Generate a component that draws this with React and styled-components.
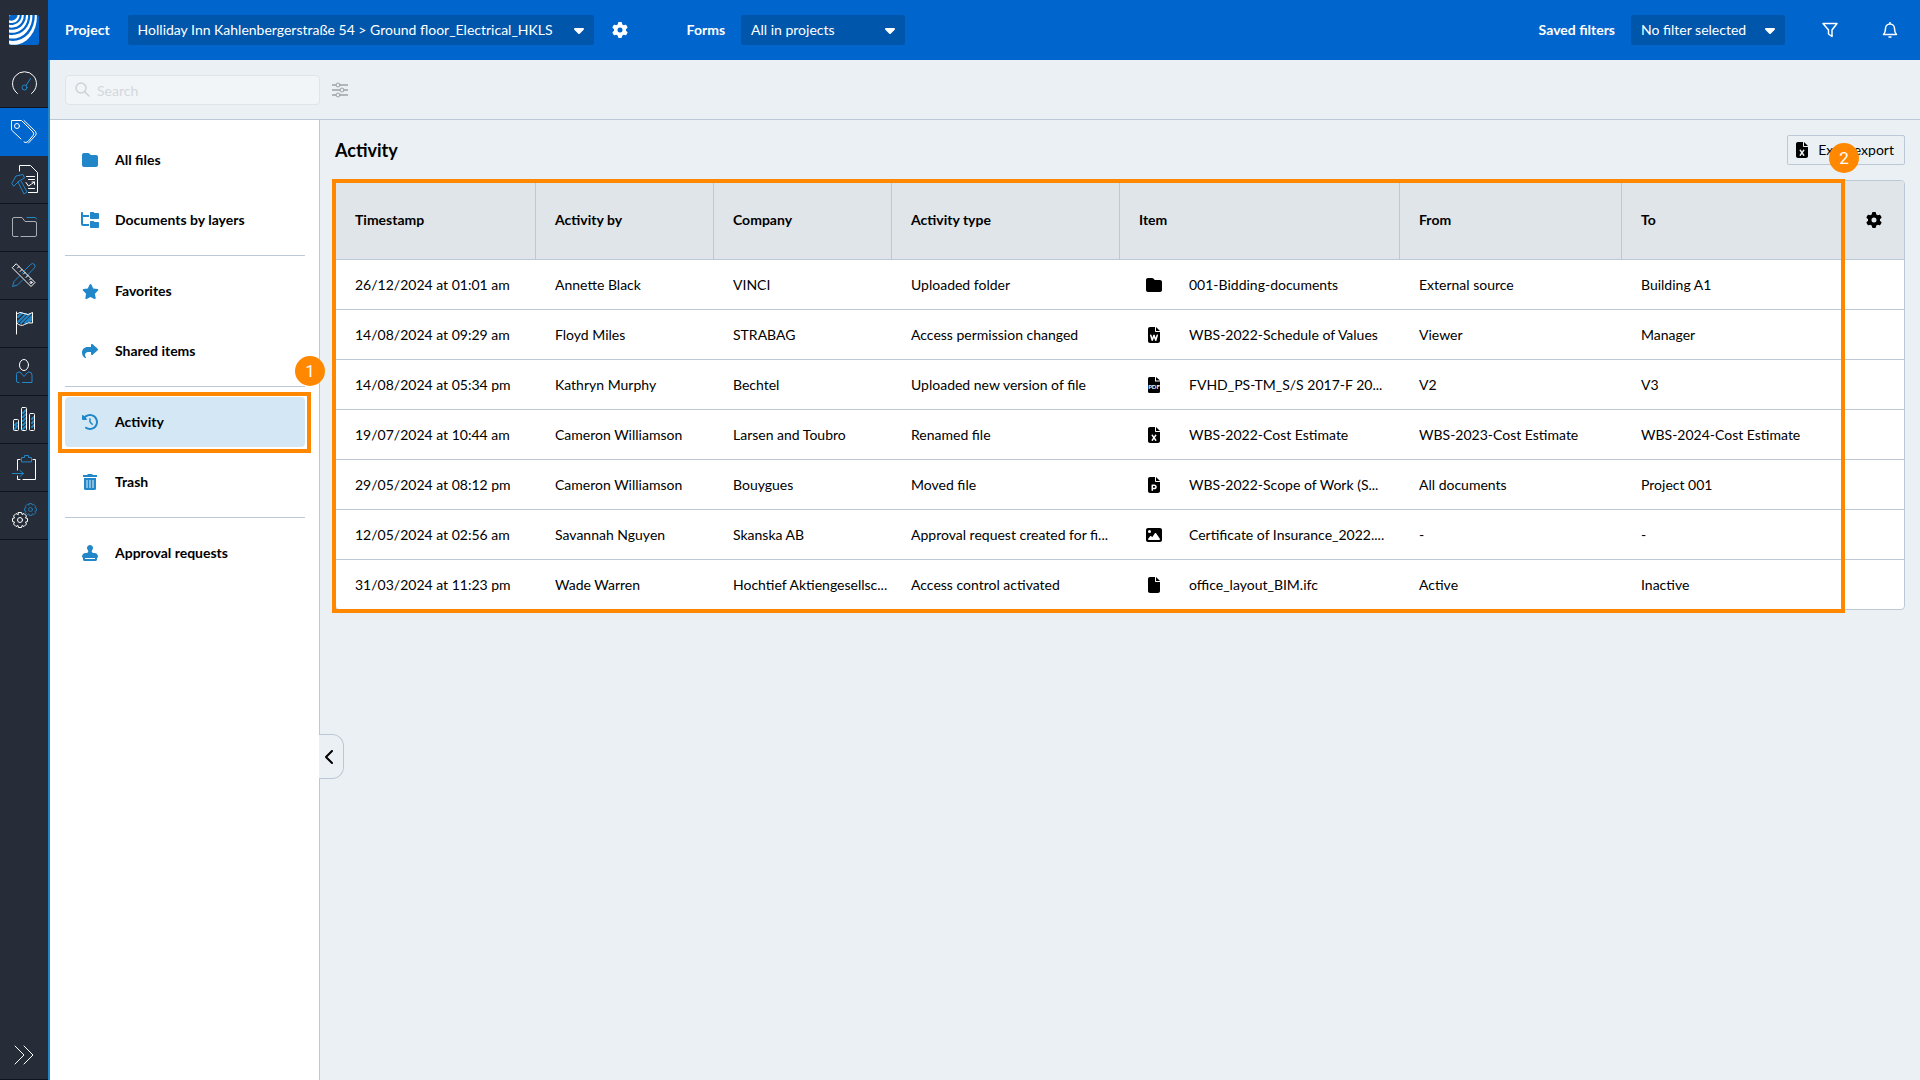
import styled, { createGlobalStyle } from "styled-components"
import {
    FaCaretDown,
    FaClockRotateLeft,
    FaFile,
    FaFileExcel,
    FaFilePowerpoint,
    FaFileWord,
    FaFolder,
    FaFolderTree,
    FaGear,
    FaImage,
    FaShare,
    FaStamp,
    FaStar,
} from "react-icons/fa6"

const GlobalStyle = createGlobalStyle`
    * {
        box-sizing: border-box;
    }
    body {
        margin: 0;
        background-color: #eaf0f4;
        color: #000;
        font-family: Lato, "Liberation Sans", sans-serif;
        font-size: 14px;
        line-height: 20px;
    }
    button, input, select {
        font: inherit;
        color: inherit;
    }
`

const Shell = styled.div`
    display: flex;
    min-height: 100vh;
`

/* left rail */
const Rail = styled.nav`
    width: 48px;
    flex-shrink: 0;
    display: flex;
    flex-direction: column;
    background-color: #272d38;
    border-bottom: 1px solid #0e1420;
`
const LogoLink = styled.a`
    height: 60px;
    display: flex;
    align-items: center;
    justify-content: center;
`
const RailLink = styled.a`
    height: 48px;
    padding-bottom: 2px;
    display: flex;
    align-items: center;
    justify-content: center;
    background-color: ${props => props.$active ? "#0065cc" : "transparent"};
    border-bottom: 1px solid ${props => props.$active ? "#0065cc" : "#0e1420"};
`
const RailToggle = styled.button`
    height: 48px;
    margin-top: auto;
    padding: 0;
    border: none;
    background: none;
    cursor: pointer;
`
const LineSvg = styled.svg`
    fill: none;
    stroke: ${props => props.$color || "#fff"};
    stroke-width: 1;
    stroke-linecap: round;
    stroke-linejoin: round;
    display: block;
    margin: auto;

    .blue {
        stroke: #2287c9;
    }
`

/* top bar */
const Page = styled.div`
    flex: 1;
    min-width: 0;
    display: flex;
    flex-direction: column;
`
const TopBar = styled.header`
    height: 60px;
    padding: 0 22px 0 17px;
    display: flex;
    align-items: center;
    background-color: #0065cc;
    color: #fff;
`
const Group = styled.div`
    display: flex;
    align-items: center;
    gap: ${props => props.$gap || "16px"};
    margin-left: ${props => props.$push ? "auto" : "0"};
    margin-right: ${props => props.$after || "0"};
`
const BarLabel = styled.label`
    font-weight: 700;
`
const SelectBox = styled.div`
    width: ${props => props.$width};
    height: 30px;
    position: relative;

    svg {
        position: absolute;
        right: 7px;
        top: 7px;
        pointer-events: none;
    }
`
const Select = styled.select`
    width: 100%;
    height: 100%;
    padding: 0 32px 0 10px;
    border: none;
    border-radius: 2px;
    appearance: none;
    background-color: #0056ab;
    cursor: pointer;
`
const IconButton = styled.button`
    width: 16px;
    height: 16px;
    padding: 0;
    border: none;
    background: none;
    display: flex;
    align-items: center;
    justify-content: center;
    cursor: pointer;
`

/* search */
const Content = styled.div`
    flex: 1;
    display: flex;
    flex-direction: column;
    border-left: 2px solid #2287c9;
`
const SearchBar = styled.div`
    height: 60px;
    padding: 0 15px;
    display: flex;
    align-items: center;
    gap: 12px;
    border-bottom: 1px solid #bcc8d6;
`
const SearchBox = styled.label`
    width: 255px;
    height: 30px;
    padding: 0 9px;
    display: flex;
    align-items: center;
    gap: 7px;
    border: 1px solid #dfe4e8;
    border-radius: 4px;
    background-color: #f1f5f8;

    svg {
        margin: 0;
        flex-shrink: 0;
    }
`
const SearchInput = styled.input`
    flex: 1;
    min-width: 0;
    padding: 2px 0 0;
    border: none;
    outline: none;
    background: none;

    &::placeholder {
        color: #d3d8dc;
        opacity: 1;
    }
`

/* file navigation */
const Split = styled.div`
    flex: 1;
    display: flex;
`
const SideBar = styled.aside`
    width: 270px;
    flex-shrink: 0;
    padding: 15px 14px 15px 15px;
    position: relative;
    background-color: #fff;
    border-right: 1px solid #bcc8d6;
`
const NavList = styled.nav`
    display: flex;
    flex-direction: column;
    gap: 10px;
`
const NavLink = styled.a`
    height: 50px;
    padding: 0 16px;
    display: flex;
    align-items: center;
    gap: 16px;
    position: relative;
    border-radius: 4px;
    background-color: ${props => props.$active ? "#d4e7f5" : "transparent"};
    color: #000;
    font-weight: 700;
    text-decoration: none;
`
const NavIcon = styled.span`
    width: 18px;
    display: flex;
    justify-content: center;
    color: #2287c9;
`
const Divider = styled.hr`
    width: 100%;
    height: 1px;
    margin: 0;
    border: none;
    background-color: #bcc8d6;
`
const CollapseButton = styled.button`
    width: 25px;
    height: 45px;
    padding: 0 5px 0 0;
    position: absolute;
    top: 64%;
    left: 100%;
    border: 1px solid #bcc8d6;
    border-left: none;
    border-radius: 0 12px 12px 0;
    background-color: #eaf0f4;
    cursor: pointer;
`

/* activity table */
const Main = styled.main`
    flex: 1;
    min-width: 0;
    padding: 15px;
`
const TitleRow = styled.div`
    height: 30px;
    margin-bottom: 15px;
    display: flex;
    align-items: center;
    justify-content: space-between;
`
const Title = styled.h1`
    margin: 0;
    font-size: 18px;
    font-weight: 700;
`
const ExportButton = styled.button`
    height: 30px;
    padding: 0 10px 0 6px;
    display: flex;
    align-items: center;
    gap: 8px;
    border: 1px solid #bcc8d6;
    border-radius: 2px;
    background: none;
    cursor: pointer;
`
const TableWrap = styled.div`
    position: relative;
`
const Table = styled.table`
    width: 100%;
    table-layout: fixed;
    border: 1px solid #bcc8d6;
    border-radius: 4px;
    border-spacing: 0;
    overflow: hidden;
    background-color: #fff;
`
const Th = styled.th`
    height: 79px;
    padding: 0 0 0 19px;
    background-color: #e0e5e9;
    border-right: 1px solid #bcc8d6;
    border-bottom: 1px solid #bcc8d6;
    text-align: left;
    font-weight: 700;

    &:last-child {
        padding: 0;
        border-right: none;
    }

    button {
        margin: auto;
    }
`
const Td = styled.td`
    height: 50px;
    padding: 0 0 0 19px;
    border-bottom: 1px solid #bcc8d6;
    white-space: nowrap;

    tr:last-child > & {
        height: 49px;
        border-bottom: none;
    }
`
const ItemCell = styled.div`
    display: flex;
    align-items: center;
    gap: 20px;
`
const FileIcon = styled.span`
    width: 30px;
    display: flex;
    justify-content: center;
`

/* numbered call-outs */
const Frame = styled.div`
    position: absolute;
    inset: ${props => props.$inset};
    border: 4px solid #ff8800;
    pointer-events: none;
`
const Badge = styled.span`
    width: 30px;
    height: 30px;
    position: absolute;
    top: -40px;
    right: -18px;
    display: flex;
    align-items: center;
    justify-content: center;
    border-radius: 50%;
    background-color: #ff8800;
    color: #fff;
    font-family: Roboto, sans-serif;
    font-size: 17px;
    font-weight: 400;
    z-index: 1;
`

const Logo = () => (
    <svg width="30" height="30" viewBox="0 0 30 30">
        <clipPath id="logo">
            <rect width="30" height="30" rx="2" />
        </clipPath>
        <g clipPath="url(#logo)">
            <rect width="30" height="30" fill="#0065cc" />
            <g transform="rotate(-12 3 2)">
                <ellipse cx="3" cy="0" rx="25" ry="30" fill="#fff" />
                <ellipse cx="3" cy="0" rx="23" ry="26" fill="#0065cc" />
                <ellipse cx="3" cy="0" rx="20.6" ry="23.6" fill="#fff" />
                <ellipse cx="3" cy="0" rx="18.6" ry="20" fill="#0065cc" />
                <ellipse cx="3" cy="0" rx="16.4" ry="17.8" fill="#fff" />
                <ellipse cx="3" cy="0" rx="14.4" ry="14.8" fill="#0065cc" />
                <ellipse cx="3" cy="0" rx="12.2" ry="12.6" fill="#fff" />
                <ellipse cx="3" cy="0" rx="10.2" ry="10" fill="#0065cc" />
                <ellipse cx="3" cy="0" rx="8" ry="8" fill="#fff" />
                <ellipse cx="3" cy="0" rx="6" ry="5.6" fill="#0065cc" />
            </g>
        </g>
    </svg>
)

const GaugeIcon = () => (
    <LineSvg width="28" height="28" viewBox="0 0 28 28">
        <path d="M7.500 24.500A12 12 0 1 1 21.500 24.500" />
        <circle className="blue" cx="14.500" cy="18.500" r="2.500" />
        <path className="blue" d="M16 16.500 20.500 9.500" />
    </LineSvg>
)

const TagIcon = () => (
    <LineSvg width="28" height="28" viewBox="0 0 28 28">
        <path d="M11 22 1.500 13V3.500H11.500L23 15Q24.500 17 23 18.500L18 24.500Q16 26.500 14 25" />
        <path d="M14 3.500 25.500 14.500Q27 17 25.500 18.500L18.500 26" />
        <circle cx="7" cy="9" r="2.500" />
    </LineSvg>
)

const ReportIcon = () => (
    <LineSvg width="28" height="30" viewBox="0 0 28 30">
        <path d="M9.500 7V1.500H20.500L27.500 8.500V28.500H18.500" />
        <path d="M16.500 12.500H24.500M18.500 15.500H24.500M16 18.500 18.500 22 21.500 20 24.500 18M22 18H24.500V20.500M18.500 24.500H24.500" />
        <path className="blue" d="M2 19 6 12 13 10.500 14.500 14 9 17 4 22ZM8 18 14 30M11 17 17 28 14 30" />
    </LineSvg>
)

const FolderIcon = () => (
    <LineSvg width="28" height="24" viewBox="0 0 28 24" $color="#a9adb4">
        <path d="M8 21.500H4Q2.500 21.500 2.500 20V4Q2.500 2.500 4 2.500H12L15 6.500H25Q26.500 6.500 26.500 8V20Q26.500 21.500 25 21.500H11" />
        <path className="blue" d="M17 2.500H25.500L26.500 4" />
    </LineSvg>
)

const ToolsIcon = () => (
    <LineSvg width="28" height="28" viewBox="0 0 28 28">
        <path className="blue" d="M12 12 20.500 3.500Q22.500 1.500 24.500 3.500 26 5.500 24 7.500L16.500 15M12.500 19 7.500 24 2.500 25.500 4 20.500 9 15.500" />
        <path d="M6.500 3 25 21.500 21 25.500 2.500 7ZM9 5.500 7.500 7M12 8.500 10 10.500M15 11.500 13.500 13M18 14.500 16 16.500M21 17.500 19.500 19" />
        <circle cx="21" cy="21.500" r="1" />
    </LineSvg>
)

const FlagIcon = () => (
    <LineSvg width="28" height="28" viewBox="0 0 28 28">
        <path className="blue" d="M8 8 12 4M8 13 16 5M11 14 20 5M15 14 22 7M19 13 22 10" strokeWidth="2" />
        <path d="M6.500 3V25M6.500 5Q10 2 14 4.500T22.500 3.500V14Q18 13 14.500 15.500T6.500 14" />
    </LineSvg>
)

const PersonIcon = () => (
    <LineSvg width="28" height="28" viewBox="0 0 28 28">
        <ellipse cx="14" cy="8" rx="4.500" ry="5.500" />
        <path className="blue" d="M9 25.500H8Q6.500 25.500 6.500 24V17.500Q6.500 15 9 15H10L14 19.500 18 15H19Q22 15 22 18V25.500H12.500" />
    </LineSvg>
)

const ChartIcon = () => (
    <LineSvg width="28" height="28" viewBox="0 0 28 28">
        <path className="blue" d="M5 20 7 18M5 24 7 21M13 8 16 5M13 12 16 9M13 16 16 13M13 20 16 17M13 24 16 21M22 14 24 12M22 18 24 16M22 22 24 20" strokeWidth="2" />
        <rect x="3.500" y="14.500" width="5" height="11" rx="1" />
        <rect x="11.500" y="2.500" width="5" height="23" rx="1" />
        <rect x="19.500" y="8.500" width="5" height="17" rx="1" />
    </LineSvg>
)

const ClipboardIcon = () => (
    <LineSvg width="28" height="28" viewBox="0 0 28 28">
        <path d="M10 6.500H7.500V17M7.500 23V26.500H10M13 26.500H25.500V6.500H23" />
        <path className="blue" d="M11.500 8.500V4.500H14.500V2.500H18.500V4.500H21.500V8.500ZM2.500 20.500H13.500M10 17.500 13.500 20.500 10 23.500" />
    </LineSvg>
)

const cogPath = "M-1.500-7.500H1.500L2-5.500 4-6.500 6.500-4 5.500-2 7.500-1.500V1.500L5.500 2 6.500 4 4 6.500 2 5.500 1.500 7.500H-1.500L-2 5.500-4 6.500-6.500 4-5.500 2-7.500 1.500V-1.500L-5.500-2-6.500-4-4-6.500-2-5.500Z"

const CogsIcon = () => (
    <LineSvg width="28" height="28" viewBox="0 0 28 28">
        <g transform="translate(10 19)">
            <path d={cogPath} />
            <circle r="2.500" />
        </g>
        <g transform="translate(20.500 8.500) scale(.8)">
            <path className="blue" d={cogPath} />
            <circle className="blue" r="2.500" />
        </g>
    </LineSvg>
)

const TrashIcon = () => (
    <svg width="16" height="16" viewBox="0 0 16 16" fill="#2287c9">
        <path d="M1 1H5L6 0H10L11 1H15V3H1Z" />
        <path d="M2 4H14V14.500Q14 16 12.500 16H3.500Q2 16 2 14.500Z" />
        <path d="M5 6V14M8 6V14M11 6V14" stroke="#a7cfe9" strokeWidth="1.500" />
    </svg>
)

const PdfIcon = () => (
    <svg width="12" height="16" viewBox="0 0 12 16">
        <path d="M1.500 0H7V4.500H12V14.500Q12 16 10.500 16H1.500Q0 16 0 14.500V1.500Q0 0 1.500 0ZM8 0 12 3.500H8Z" />
        <text x="6" y="12" textAnchor="middle" fill="#fff" fontSize="6" fontWeight="700">PDF</text>
    </svg>
)

const SearchIcon = () => (
    <LineSvg width="15" height="15" viewBox="0 0 15 15" $color="#cdd2d6">
        <circle cx="6" cy="6" r="5" strokeWidth="1.500" />
        <path d="M9.500 9.500 14 14" strokeWidth="1.500" />
    </LineSvg>
)

const SlidersIcon = () => (
    <LineSvg width="16" height="16" viewBox="0 0 16 16" $color="#9da3a8">
        <path d="M0 3H4M8 3H16M0 8H8M12 8H16M0 13H4M8 13H16" strokeWidth="1.500" />
        <circle cx="6" cy="3" r="2" />
        <circle cx="10" cy="8" r="2" />
        <circle cx="6" cy="13" r="2" />
    </LineSvg>
)

const FilterIcon = () => (
    <LineSvg width="16" height="16" viewBox="0 0 16 16">
        <path d="M1 1.500H15L10 8V14.500L6.500 12V8Z" strokeWidth="1.500" />
    </LineSvg>
)

const BellIcon = () => (
    <LineSvg width="16" height="16" viewBox="0 0 16 16">
        <path d="M8 .5V2M1.500 12.500H14.500Q12.500 10.500 12.500 6.500C12.500 4 10.500 2 8 2S3.500 4 3.500 6.500Q3.500 10.500 1.500 12.500ZM7 15H9" strokeWidth="1.500" />
    </LineSvg>
)

const railItems = [
    { label: "Dashboard", icon: <GaugeIcon /> },
    { label: "Tickets", icon: <TagIcon />, active: true },
    { label: "Reports", icon: <ReportIcon /> },
    { label: "Documents", icon: <FolderIcon /> },
    { label: "Plans", icon: <ToolsIcon /> },
    { label: "Milestones", icon: <FlagIcon /> },
    { label: "Contacts", icon: <PersonIcon /> },
    { label: "Statistics", icon: <ChartIcon /> },
    { label: "Forms", icon: <ClipboardIcon /> },
    { label: "Settings", icon: <CogsIcon /> },
]

const navItems = [
    { label: "All files", icon: <FaFolder size={16} /> },
    { label: "Documents by layers", icon: <FaFolderTree size={18} /> },
    null,
    { label: "Favorites", icon: <FaStar size={17} /> },
    { label: "Shared items", icon: <FaShare size={16} /> },
    null,
    { label: "Activity", icon: <FaClockRotateLeft size={16} />, active: true },
    { label: "Trash", icon: <TrashIcon /> },
    null,
    { label: "Approval requests", icon: <FaStamp size={16} /> },
]

const columns = [
    { label: "Timestamp", width: 200 },
    { label: "Activity by", width: 178 },
    { label: "Company", width: 178 },
    { label: "Activity type", width: 228 },
    { label: "Item", width: 280 },
    { label: "From", width: 222 },
    { label: "To", width: 222 },
]

const fileIcons = {
    folder: <FaFolder size={16} />,
    word: <FaFileWord size={16} />,
    pdf: <PdfIcon />,
    excel: <FaFileExcel size={16} />,
    powerpoint: <FaFilePowerpoint size={16} />,
    image: <FaImage size={16} />,
    file: <FaFile size={16} />,
}

const rows = [
    ["26/12/2024 at 01:01 am", "Annette Black", "VINCI", "Uploaded folder", "folder", "001-Bidding-documents", "External source", "Building A1"],
    ["14/08/2024 at 09:29 am", "Floyd Miles", "STRABAG", "Access permission changed", "word", "WBS-2022-Schedule of Values", "Viewer", "Manager"],
    ["14/08/2024 at 05:34 pm", "Kathryn Murphy", "Bechtel", "Uploaded new version of file", "pdf", "FVHD_PS-TM_S/S 2017-F 20...", "V2", "V3"],
    ["19/07/2024 at 10:44 am", "Cameron Williamson", "Larsen and Toubro", "Renamed file", "excel", "WBS-2022-Cost Estimate", "WBS-2023-Cost Estimate", "WBS-2024-Cost Estimate"],
    ["29/05/2024 at 08:12 pm", "Cameron Williamson", "Bouygues", "Moved file", "powerpoint", "WBS-2022-Scope of Work (S...", "All documents", "Project 001"],
    ["12/05/2024 at 02:56 am", "Savannah Nguyen", "Skanska AB", "Approval request created for fi...", "image", "Certificate of Insurance_2022....", "-", "-"],
    ["31/03/2024 at 11:23 pm", "Wade Warren", "Hochtief Aktiengesellsc...", "Access control activated", "file", "office_layout_BIM.ifc", "Active", "Inactive"],
]

const BarSelect = ({ id, width, value }) => (
    <SelectBox $width={width}>
        <Select id={id}>
            <option>{value}</option>
        </Select>
        <FaCaretDown size={16} />
    </SelectBox>
)

const App = () => {
    return (
        <Shell>
            <GlobalStyle />
            <Rail>
                <LogoLink href="#" aria-label="Home">
                    <Logo />
                </LogoLink>
                {railItems.map(item => (
                    <RailLink key={item.label} href="#" aria-label={item.label} $active={item.active}>
                        {item.icon}
                    </RailLink>
                ))}
                <RailToggle aria-label="Expand menu">
                    <LineSvg width="20" height="20" viewBox="0 0 20 20">
                        <path d="M1 1 10 10 1 19M10 1 19 10 10 19" />
                    </LineSvg>
                </RailToggle>
            </Rail>
            <Page>
                <TopBar>
                    <Group $gap="18px" $after="59px">
                        <BarLabel htmlFor="project">Project</BarLabel>
                        <BarSelect id="project" width="466px" value="Holliday Inn Kahlenbergerstraße 54 > Ground floor_Electrical_HKLS" />
                        <IconButton aria-label="Project settings">
                            <FaGear size={16} />
                        </IconButton>
                    </Group>
                    <Group>
                        <BarLabel htmlFor="forms">Forms</BarLabel>
                        <BarSelect id="forms" width="164px" value="All in projects" />
                    </Group>
                    <Group $push $after="37px">
                        <BarLabel htmlFor="filters">Saved filters</BarLabel>
                        <BarSelect id="filters" width="154px" value="No filter selected" />
                    </Group>
                    <Group $gap="44px">
                        <IconButton aria-label="Filter">
                            <FilterIcon />
                        </IconButton>
                        <IconButton aria-label="Notifications">
                            <BellIcon />
                        </IconButton>
                    </Group>
                </TopBar>
                <Content>
                    <SearchBar>
                        <SearchBox>
                            <SearchIcon />
                            <SearchInput type="search" placeholder="Search" aria-label="Search" />
                        </SearchBox>
                        <IconButton aria-label="Search options">
                            <SlidersIcon />
                        </IconButton>
                    </SearchBar>
                    <Split>
                        <SideBar>
                            <NavList>
                                {navItems.map((item, i) => item ? (
                                    <NavLink key={i} href="#" $active={item.active}>
                                        <NavIcon>{item.icon}</NavIcon>
                                        {item.label}
                                        {item.active && (
                                            <Frame $inset="-5px -6px -6px -7px">
                                                <Badge>1</Badge>
                                            </Frame>
                                        )}
                                    </NavLink>
                                ) : <Divider key={i} />)}
                            </NavList>
                            <CollapseButton aria-label="Collapse sidebar">
                                <LineSvg width="8" height="14" viewBox="0 0 8 14" $color="#000">
                                    <path d="M7 1 1 7 7 13" strokeWidth="2" />
                                </LineSvg>
                            </CollapseButton>
                        </SideBar>
                        <Main>
                            <TitleRow>
                                <Title>Activity</Title>
                                <ExportButton>
                                    <FaFileExcel size={16} />
                                    Excel export
                                </ExportButton>
                            </TitleRow>
                            <TableWrap>
                                <Table>
                                    <colgroup>
                                        {columns.map(col => <col key={col.label} width={col.width} />)}
                                        <col width="60" />
                                    </colgroup>
                                    <thead>
                                        <tr>
                                            {columns.map(col => <Th key={col.label}>{col.label}</Th>)}
                                            <Th>
                                                <IconButton aria-label="Table settings">
                                                    <FaGear size={16} />
                                                </IconButton>
                                            </Th>
                                        </tr>
                                    </thead>
                                    <tbody>
                                        {rows.map(([time, by, company, type, kind, item, from, to]) => (
                                            <tr key={time}>
                                                <Td>{time}</Td>
                                                <Td>{by}</Td>
                                                <Td>{company}</Td>
                                                <Td>{type}</Td>
                                                <Td>
                                                    <ItemCell>
                                                        <FileIcon>{fileIcons[kind]}</FileIcon>
                                                        {item}
                                                    </ItemCell>
                                                </Td>
                                                <Td>{from}</Td>
                                                <Td>{to}</Td>
                                                <Td />
                                            </tr>
                                        ))}
                                    </tbody>
                                </Table>
                                <Frame $inset="-1px 60px -3px -3px">
                                    <Badge>2</Badge>
                                </Frame>
                            </TableWrap>
                        </Main>
                    </Split>
                </Content>
            </Page>
        </Shell>
    )
}

export default App
